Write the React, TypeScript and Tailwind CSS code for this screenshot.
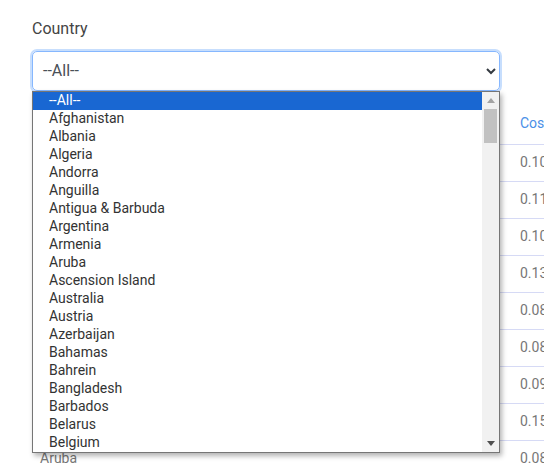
const countries = [
  'Afghanistan',
  'Albania',
  'Algeria',
  'Andorra',
  'Anguilla',
  'Antigua & Barbuda',
  'Argentina',
  'Armenia',
  'Aruba',
  'Ascension Island',
  'Australia',
  'Austria',
  'Azerbaijan',
  'Bahamas',
  'Bahrein',
  'Bangladesh',
  'Barbados',
  'Belarus',
  'Belgium',
];

const rows = [
  { country: 'Afghanistan', cost: '0.10' },
  { country: 'Albania', cost: '0.11' },
  { country: 'Algeria', cost: '0.10' },
  { country: 'Andorra', cost: '0.13' },
  { country: 'Anguilla', cost: '0.08' },
  { country: 'Antigua & Barbuda', cost: '0.08' },
  { country: 'Argentina', cost: '0.09' },
  { country: 'Armenia', cost: '0.15' },
  { country: 'Aruba', cost: '0.08' },
];

function ScrollBar() {
  return (
    <div className="w-[17px] h-full bg-[#f1f1f1] flex flex-col items-center">
      <div className="h-[17px] flex items-center justify-center">
        <svg width="8" height="5" viewBox="0 0 8 5">
          <path d="M0 5 L4 0 L8 5 Z" fill="#a3a3a3" />
        </svg>
      </div>
      <div className="w-[13px] h-[34px] bg-[#c1c1c1]" />
      <div className="flex-1" />
      <div className="h-[17px] flex items-center justify-center">
        <svg width="8" height="5" viewBox="0 0 8 5">
          <path d="M0 0 L8 0 L4 5 Z" fill="#505050" />
        </svg>
      </div>
    </div>
  );
}

export default function App() {
  return (
    <div className="w-[544px] h-[471px] overflow-hidden bg-white font-['Roboto',sans-serif] pl-8 pt-[17px]">
      <label className="block text-[16px] leading-6 text-[#444]">Country</label>

      <div className="relative mt-[10px] w-[468px]">
        <div className="h-[40px] rounded-[5px] border border-[#86b7fe] ring-2 ring-[#c7defd] flex items-center justify-between pl-[10px] pr-[2px] text-[16px] text-[#495057]">
          <span>--All--</span>
          <svg width="12" height="8" viewBox="0 0 12 8">
            <path d="M2 2 L6 6 L10 2" stroke="#343a40" strokeWidth="2" fill="none" />
          </svg>
        </div>

        {/* open option list, drawn over the table */}
        <div className="absolute left-0 top-[40px] z-10 w-[468px] h-[362px] border border-[#767676] bg-white shadow-[2px_3px_5px_rgba(0,0,0,0.3)] flex text-[14px] leading-[17px] text-[#333]">
          <div className="flex-1">
            <div className="h-[18px] bg-[#1967d2] text-white pl-4">--All--</div>
            {countries.map((c) => (
              <div key={c} className="h-[18px] pl-4 whitespace-nowrap">
                {c}
              </div>
            ))}
          </div>
          <ScrollBar />
        </div>
      </div>

      <table className="mt-[12px] w-[560px] border-collapse text-[14px]">
        <thead>
          <tr className="h-[41px] border-b border-[#d6daf5]">
            <th className="text-left font-normal text-[#4a8fe7] px-2 w-[480px]">Country</th>
            <th className="text-left font-normal text-[#4a8fe7] px-2">Cost</th>
          </tr>
        </thead>
        <tbody>
          {rows.map((r) => (
            <tr key={r.country} className="h-[37px] border-b border-[#d6daf5] text-[#777]">
              <td className="px-2">{r.country}</td>
              <td className="px-2">{r.cost}</td>
            </tr>
          ))}
        </tbody>
      </table>
    </div>
  );
}
